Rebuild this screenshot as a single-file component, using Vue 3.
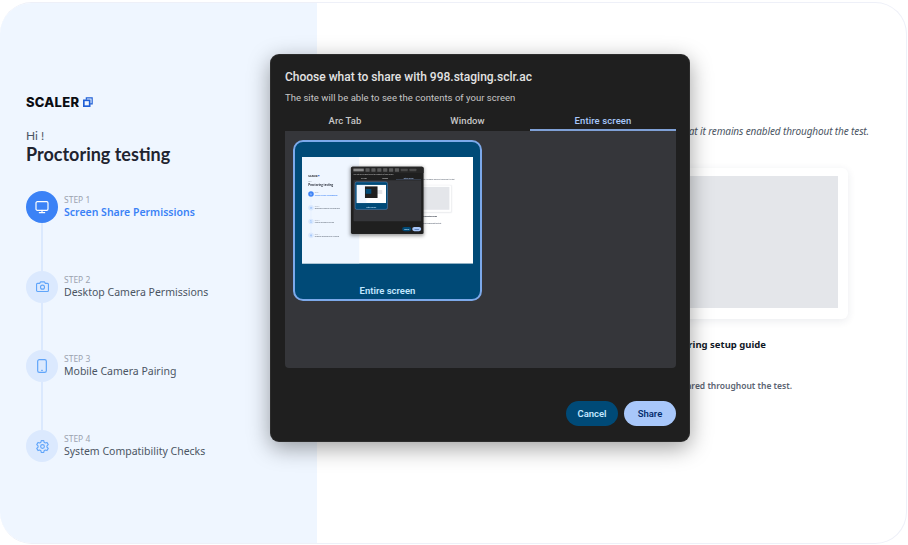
<script setup>
defineOptions({ name: 'App' })
defineProps({ depth: { type: Number, default: 0 } })
const steps = [
  { n: 'STEP 1', t: 'Screen Share Permissions', i: 'screen' },
  { n: 'STEP 2', t: 'Desktop Camera Permissions', i: 'camera' },
  { n: 'STEP 3', t: 'Mobile Camera Pairing', i: 'phone' },
  { n: 'STEP 4', t: 'System Compatibility Checks', i: 'gear' },
]
</script>

<template>
  <div class="frame" :class="{ nested: depth > 0 }">
    <aside class="side">
      <div class="logo">
        <span class="logo-text">SCALER</span>
        <svg class="logo-icon" viewBox="0 0 12 12" width="10" height="10" fill="none" stroke="#1f5fd6">
          <path d="M4 3.2V1h7v7.2H8.6" stroke-width="1.4" />
          <rect x="1" y="4" width="7" height="7" stroke-width="2" />
        </svg>
      </div>
      <p class="hi">Hi !</p>
      <h1 class="title">Proctoring testing</h1>
      <ol class="steps">
        <li v-for="(s, idx) in steps" :key="s.n" class="step" :class="{ active: idx === 0 }">
          <div class="marker">
            <span class="dot">
              <svg v-if="s.i === 'screen'" viewBox="0 0 24 24" width="16" height="16" fill="none" stroke="currentColor" stroke-width="1.8" stroke-linejoin="round" stroke-linecap="round">
                <rect x="3" y="4" width="18" height="13" rx="2" /><path d="M12 17v3M8 20.5h8" />
              </svg>
              <svg v-else-if="s.i === 'camera'" viewBox="0 0 24 24" width="15" height="15" fill="none" stroke="currentColor" stroke-width="1.8" stroke-linejoin="round">
                <path d="M4 7h3.5L9 4.5h6L16.5 7H20a1.5 1.5 0 0 1 1.5 1.5v10A1.5 1.5 0 0 1 20 20H4a1.5 1.5 0 0 1-1.5-1.5v-10A1.5 1.5 0 0 1 4 7z" /><circle cx="12" cy="13" r="3.2" />
              </svg>
              <svg v-else-if="s.i === 'phone'" viewBox="0 0 24 24" width="16" height="16" fill="none" stroke="currentColor" stroke-width="1.8" stroke-linecap="round">
                <rect x="5.5" y="2.5" width="13" height="19" rx="2.5" /><path d="M11.5 18.5h1" />
              </svg>
              <svg v-else viewBox="0 0 24 24" width="15" height="15" fill="none" stroke="currentColor" stroke-width="1.8" stroke-linejoin="round">
                <path d="M10 2.5h4l.6 2.8 1.9 1.1 2.7-.9 2 3.5-2.1 1.9v2.2l2.1 1.9-2 3.5-2.7-.9-1.9 1.1-.6 2.8h-4l-.6-2.8-1.9-1.1-2.7.9-2-3.5 2.1-1.9v-2.2L2.8 9l2-3.5 2.7.9 1.9-1.1z" /><circle cx="12" cy="12" r="3" />
              </svg>
            </span>
            <span v-if="idx < steps.length - 1" class="line"></span>
          </div>
          <div class="step-text">
            <span class="step-no">{{ s.n }}</span>
            <span class="step-name">{{ s.t }}</span>
          </div>
        </li>
      </ol>
    </aside>

    <main class="main">
      <p class="lead">that it remains enabled throughout the test.</p>
      <div class="card"><div class="card-img"></div></div>
      <p class="guide">Screen sharing setup guide</p>
      <p class="note">Make sure that your entire screen stays shared throughout the test.</p>
    </main>

    <section class="modal">
      <div v-if="depth > 0" class="strip">
        <span class="strip-label"></span>
        <i v-for="k in 6" :key="k" class="strip-btn"></i>
        <b class="strip-wide"></b><b class="strip-wide"></b>
      </div>
      <h2 class="m-title">Choose what to share with 998.staging.sclr.ac</h2>
      <p class="m-sub">The site will be able to see the contents of your screen</p>
      <div class="tabs">
        <span class="tab">Arc Tab</span>
        <span class="tab">Window</span>
        <span class="tab on">Entire screen</span>
      </div>
      <div class="panel">
        <div class="source">
          <div class="shot">
            <div class="shot-scale">
              <App v-if="depth < 1" :depth="depth + 1" />
              <div v-else class="mini">
                <div class="mini-side"></div>
                <div class="mini-main"><div class="mini-img"></div></div>
                <div class="mini-modal"><div class="mini-source"></div></div>
              </div>
            </div>
          </div>
          <span class="source-name">Entire screen</span>
        </div>
      </div>
      <div class="actions">
        <button class="btn cancel">Cancel</button>
        <button class="btn share">Share</button>
      </div>
    </section>
  </div>
</template>

<style>
html, body { margin: 0; background: #fff; overflow: hidden; }
</style>

<style scoped>
.frame {
  position: relative;
  box-sizing: border-box;
  width: 907px;
  height: 542px;
  margin-top: 2px;
  display: flex;
  overflow: hidden;
  background: #fff;
  border: 1px solid #eef0f8;
  border-left: 0;
  border-radius: 32px;
  font-family: "Noto Sans", sans-serif;
}
.frame.nested {
  width: 991px;
  height: 616px;
  margin: 0;
  border: 0;
  border-radius: 0;
}
.side {
  box-sizing: border-box;
  flex: 0 0 317px;
  padding: 90px 0 0 26px;
  background: #eff6ff;
}
.nested .side { flex-basis: 331px; padding: 100px 0 0 36px; }
.logo { display: flex; align-items: center; gap: 4px; height: 18px; }
.logo-text { font: 800 13px/18px Inter, sans-serif; letter-spacing: .25px; color: #0b0d12; }
.logo-icon { display: block; }
.hi { margin: 17px 0 0; font: 400 12px/16px Lato, sans-serif; color: #4b5563; }
.title { margin: -2px 0 0; font: 700 18px/24px Lato, sans-serif; color: #1f2430; }
.steps { list-style: none; margin: 25px 0 0; padding: 0; }
.step { display: flex; gap: 6px; height: 79.7px; }
.marker { display: flex; flex-direction: column; align-items: center; width: 32px; }
.dot {
  flex: 0 0 32px;
  width: 32px;
  border-radius: 50%;
  display: flex;
  align-items: center;
  justify-content: center;
  background: #dbe9fe;
  color: #60a5fa;
}
.active .dot { background: #3b82f6; color: #fff; }
.line { flex: 1; width: 2px; background: #dbe9fe; }
.step-text { display: flex; flex-direction: column; padding-top: 3px; }
.step-no { font: 400 8.5px/11px "Noto Sans", sans-serif; color: #9ca3af; }
.step-name { font: 400 10.5px/14px "Noto Sans", sans-serif; color: #4b5563; white-space: nowrap; }
.active .step-name { color: #3b82f6; font-weight: 600; }

.main { flex: 1; min-width: 0; padding: 119px 0 0 48px; }
.lead { margin: 0; width: 504px; font: italic 400 10px/18px "Noto Sans", sans-serif; letter-spacing: -.12px; color: #4b5563; white-space: nowrap; text-align: right; }
.card {
  box-sizing: border-box;
  width: 483px;
  height: 151px;
  margin-top: 28px;
  padding: 8px 10px 11px;
  background: #fff;
  border-radius: 6px;
  box-shadow: 0 2px 8px rgba(30, 40, 80, .09);
}
.card-img { height: 100%; background: #e4e6ea; }
.guide { margin: 18px 0 0; width: 401px; font: 700 9.5px/16px "Noto Sans", sans-serif; color: #111827; white-space: nowrap; text-align: right; }
.note { margin: 26px 0 0; width: 427px; font: 600 8.5px/14px "Noto Sans", sans-serif; color: #5b6472; white-space: nowrap; text-align: right; }

.modal {
  position: absolute;
  left: 270px;
  top: 51px;
  box-sizing: border-box;
  width: 420px;
  height: 388px;
  padding: 0 14px 0 15px;
  display: flex;
  flex-direction: column;
  background: #1f1f1f;
  border-radius: 9px;
  box-shadow: 0 0 0 1px rgba(255, 255, 255, .06) inset, 0 6px 22px rgba(0, 0, 0, .38);
  font-family: Roboto, sans-serif;
}
.nested .modal { left: 283px; top: 57px; }
.strip {
  position: absolute;
  left: 0;
  right: 0;
  top: 0;
  height: 36px;
  padding: 0 14px;
  display: flex;
  align-items: center;
  gap: 10px;
  background: #262626;
  border-radius: 9px 9px 0 0;
}
.strip-label { width: 60px; height: 16px; background: #8a8a8a; }
.strip-btn { width: 24px; height: 20px; background: #5c5c5c; border-radius: 3px; }
.strip-wide { width: 40px; height: 14px; background: #4a4a4a; border-radius: 3px; }
.m-title { margin: 15px 0 0; font: 500 12px/16px Roboto, sans-serif; color: #e3e3e3; }
.m-sub { margin: 6px 0 0; font: 400 9.5px/14px Roboto, sans-serif; letter-spacing: .03px; color: #c7c7c7; }
.tabs { display: grid; grid-template-columns: 120px 125px 146px; margin-top: 6px; }
.tab { height: 20px; font: 500 9.5px/20px Roboto, sans-serif; letter-spacing: .1px; text-align: center; color: #c7c7c7; }
.tab.on { color: #a8c7fa; box-shadow: inset 0 -2px 0 #7fa0d6; }
.panel { box-sizing: border-box; height: 237px; padding: 9px 8px; background: #35363a; border-radius: 0 0 4px 4px; }
.source {
  box-sizing: border-box;
  width: 189px;
  height: 161px;
  display: flex;
  flex-direction: column;
  align-items: center;
  padding-top: 15px;
  background: #004a77;
  border: 2px solid #7ca9ea;
  border-radius: 10px;
}
.shot { width: 171.5px; height: 106.5px; overflow: hidden; }
.shot-scale { width: 991px; height: 616px; transform: scale(.173); transform-origin: 0 0; filter: blur(1.6px); }
.source-name { margin-top: 20px; font: 600 9.5px/14px Roboto, sans-serif; color: #c2e7ff; }
.mini { position: relative; display: flex; width: 991px; height: 616px; background: #fff; }
.mini-side { flex: 0 0 331px; background: #eff6ff; }
.mini-main { flex: 1; padding: 180px 130px 0 48px; }
.mini-img { height: 130px; background: #e4e6ea; }
.mini-modal { position: absolute; left: 283px; top: 57px; width: 420px; height: 388px; background: #1f1f1f; }
.mini-source { width: 189px; height: 161px; margin: 86px 0 0 23px; background: #004a77; }
.actions { display: flex; justify-content: flex-end; gap: 6px; margin-top: 33px; }
.btn { width: 52px; height: 25px; padding: 0; border: 0; border-radius: 13px; font: 600 9.5px/25px Roboto, sans-serif; }
.cancel { background: #004a77; color: #c2e7ff; }
.share { background: #a8c7fa; color: #062e6f; }
</style>
